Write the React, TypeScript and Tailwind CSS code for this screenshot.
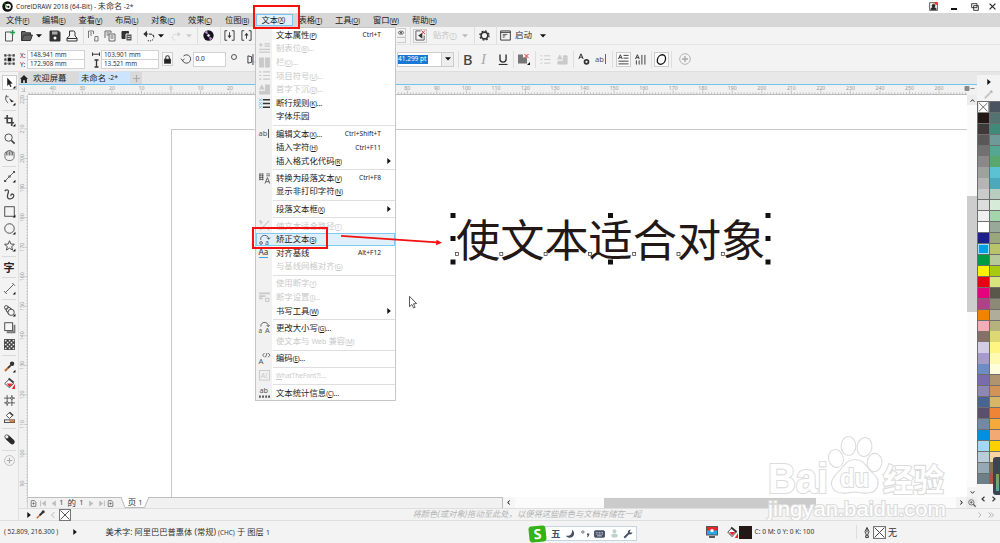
import type { ReactNode } from "react";
import clsx from "clsx";

const FONT = "font-['Noto_Sans','Noto_Sans_CJK_SC',sans-serif]";

/* ---------- small helpers ---------- */

const Ico = ({ children, s = "size-[12px]", vb = "0 0 12 12" }: { children: ReactNode; s?: string; vb?: string }) => (
  <svg viewBox={vb} className={clsx("shrink-0 overflow-visible", s)} fill="none" stroke="currentColor" strokeWidth={1}>
    {children}
  </svg>
);

const Cell = ({ w, children }: { w: string; children?: ReactNode }) => (
  <div className={clsx("flex h-full shrink-0 items-center", w)}>{children}</div>
);

const Caret = ({ c = "text-[#111]" }: { c?: string }) => (
  <svg viewBox="0 0 6 4" className={clsx("h-[4px] w-[6px]", c)}>
    <path d="M0 0.3h6L3 3.6z" fill="currentColor" />
  </svg>
);

const Play = ({ c = "text-[#111]" }: { c?: string }) => (
  <svg viewBox="0 0 4 6" className={clsx("h-[6px] w-[4px] shrink-0", c)}>
    <path d="M0.3 0v6L3.8 3z" fill="currentColor" />
  </svg>
);

const Sep = () => <div className="h-[17px] w-px bg-[#dedede]" />;

const Key = ({ k }: { k: string }) => (
  <span className="text-[6.3px] tracking-[-0.2px]">
    (<u>{k}</u>)
  </span>
);

/* ---------- title + menu ---------- */

const TitleBar = () => (
  <header className="flex h-[13px] shrink-0 items-center bg-white">
    <Cell w="w-[16px]">
      <svg viewBox="0 0 12 12" className="ml-[1.5px] size-[11px]">
        <circle cx="6" cy="6" r="5.7" fill="#111" />
        <circle cx="6.6" cy="6" r="3.1" fill="#fff" />
        <path d="M2 1.8L7 6.5 4.8 7.2z" fill="#56b947" />
        <circle cx="7" cy="6.4" r="1.2" fill="#111" />
      </svg>
    </Cell>
    <span className="flex-1 text-[6.65px] leading-none text-[#333]">
      CorelDRAW 2018 (64-Bit) - <span className="text-[8.1px]">未命名</span> -2*
    </span>
    <div className="flex items-center text-[#222]">
      <Cell w="w-[22px]">
        <Ico s="size-[9px]">
          <rect x="1" y="1" width="10" height="10" />
          <circle cx="6" cy="5" r="2" fill="currentColor" />
          <path d="M2.5 10c0-4 7-4 7 0z" fill="currentColor" />
          <circle cx="9.6" cy="1.8" r="2.2" fill="#f33" stroke="none" />
        </Ico>
      </Cell>
      <Cell w="w-[20px]">
        <div className="mt-[4px] h-[2px] w-[6px] bg-[#111]" />
      </Cell>
      <Cell w="w-[18px]">
        <Ico s="size-[8px]">
          <path d="M1 1h8v6H1zM4 4h7v7H4z" strokeWidth={1.3} fill="#fff" />
        </Ico>
      </Cell>
      <Cell w="w-[11px]">
        <Ico s="size-[7px]">
          <path d="M1 1l10 10M11 1L1 11" strokeWidth={2} />
        </Ico>
      </Cell>
    </div>
  </header>
);

const menus = [
  { t: "文件", k: "F", w: "w-[36px]" },
  { t: "编辑", k: "E", w: "w-[36.5px]" },
  { t: "查看", k: "V", w: "w-[36.5px]" },
  { t: "布局", k: "L", w: "w-[36px]" },
  { t: "对象", k: "C", w: "w-[37px]" },
  { t: "效果", k: "C", w: "w-[37px]" },
  { t: "位图", k: "B", w: "w-[31px]" },
  { t: "文本", k: "X", w: "w-[42.5px]", active: true },
  { t: "表格", k: "T", w: "w-[36.5px]" },
  { t: "工具", k: "O", w: "w-[38px]" },
  { t: "窗口", k: "W", w: "w-[39px]" },
  { t: "帮助", k: "H", w: "w-[36px]" },
];

const MenuBar = () => (
  <nav className="flex h-[14px] shrink-0 items-center bg-[#d7d7d7] pl-[6px] text-[8.3px] leading-none text-[#222]">
    {menus.map((m) => (
      <div key={m.t} className={clsx("shrink-0 whitespace-nowrap", m.w)}>
        <span
          className={clsx(
            m.active && "flex h-[12px] w-[37px] items-center border border-[#7cc5ee] bg-[#e3eff9] pl-[4.5px]"
          )}
        >
          {m.t}
          <Key k={m.k} />
        </span>
      </div>
    ))}
  </nav>
);

/* ---------- toolbars ---------- */

const StandardBar = () => (
  <div className="flex h-[18px] shrink-0 items-center border-b border-[#e4e4e4] bg-[#f3f3f3] pl-[4px] text-[#333]">
    <Cell w="w-[17px]">
      <Ico>
        <path d="M7 2H1.5v9h7V5" stroke="#555" />
        <path d="M8.6 0v5M6.1 2.5h5" stroke="#21a04a" strokeWidth={1.6} />
      </Ico>
    </Cell>
    <Cell w="w-[15px]">
      <Ico>
        <path d="M0.6 10.5v-9h3.6l1 1.3h4.3V5M0.6 10.5L3 5h8.4l-2 5.5z" fill="#333" fillOpacity={0.75} />
      </Ico>
    </Cell>
    <Cell w="w-[13px]"><Caret /></Cell>
    <Cell w="w-[17px]">
      <Ico>
        <path d="M1 1h8.5L11 2.5V11H1z" fill="#333" />
        <path d="M3 1.5h5.5v3H3z" fill="#aaa" stroke="none" />
        <circle cx="6" cy="8" r="1.5" fill="#fff" stroke="none" />
      </Ico>
    </Cell>
    <Cell w="w-[17px]">
      <Ico>
        <path d="M3.5 6V1h4.3L9 2.2V6M3.5 6L1 8v3h10V8L9 6M1 8.5h10" />
      </Ico>
    </Cell>
    <Cell w="w-[4px]"><Sep /></Cell>
    <Cell w="w-[17px]">
      <Ico>
        <path d="M1.5 8V1h5v3M3 3h2M3 5h2M8 6.5h3V11H7.6z" stroke="#777" />
      </Ico>
    </Cell>
    <Cell w="w-[17px]">
      <Ico>
        <path d="M1 8V1h6v2M2.5 3h3M2.5 5h2M5 4h6v7H5zM6.5 6h3M6.5 8h3" stroke="#666" />
      </Ico>
    </Cell>
    <Cell w="w-[16px]">
      <Ico>
        <path d="M1 1.5h6.5v7H1z" fill="#333" />
        <path d="M5 4h6v7H5z" fill="#555" stroke="#f3f3f3" />
        <path d="M6.5 6.5h3M6.5 8.5h3" stroke="#ccc" />
      </Ico>
    </Cell>
    <Cell w="w-[6px]"><Sep /></Cell>
    <Cell w="w-[15px]">
      <Ico>
        <path d="M2 4h4.5c3.500 0 4.700 2 4.200 4.300" strokeDasharray="3 0.8" strokeWidth={1.2} />
        <path d="M4 0.8L0.3 4 4 7.2z" fill="currentColor" stroke="none" />
        <path d="M10 9.5c-1.5 1.7-4 1.9-6 .6" strokeDasharray="1.2 1" />
      </Ico>
    </Cell>
    <Cell w="w-[13px]"><Caret /></Cell>
    <Cell w="w-[15px]">
      <Ico s="size-[10px]">
        <path d="M10 4H6C2.5 4 1 6 1.5 8.500c.5 1.500 2 2.500 4 2.500" stroke="#cfcfcf" strokeDasharray="2.4 0.8" />
        <path d="M8 1l3.500 3L8 7z" fill="#cfcfcf" stroke="none" />
      </Ico>
    </Cell>
    <Cell w="w-[11px]"><Caret c="text-[#ccc]" /></Cell>
    <Cell w="w-[6px]"><Sep /></Cell>
    <Cell w="w-[17px]">
      <Ico s="size-[11px]">
        <circle cx="6" cy="6" r="5.6" fill="#16101f" stroke="none" />
        <path d="M6 6L1.8 2.6A5.5 5.5 0 014.5 0.7zM6 6l4.2 3.4A5.5 5.5 0 017.5 11.3z" fill="#b78bd6" stroke="none" />
        <circle cx="6" cy="6" r="1.9" fill="#fff" stroke="#16101f" />
      </Ico>
    </Cell>
    <Cell w="w-[4px]"><Sep /></Cell>
    <Cell w="w-[17px]">
      <Ico s="size-[11px]">
        <path d="M3.5 0.8H1v10.4h2.5M8.5 0.8H11v10.4H8.5M6 2.5v5" />
        <path d="M3.8 6h4.4L6 9z" fill="currentColor" stroke="none" />
      </Ico>
    </Cell>
    <Cell w="w-[156px]">
      <Ico s="size-[11px]">
        <path d="M3.5 0.8H1v10.4h2.5M8.5 0.8H11v10.4H8.5M6 9.5v-5" />
        <path d="M3.8 6h4.4L6 3z" fill="currentColor" stroke="none" />
      </Ico>
    </Cell>
    <Cell w="w-[13px]">
      <div className="flex h-[15px] w-[9px] items-start border border-l-0 border-[#ccc] pt-px">
        <Ico s="size-[8px]">
          <ellipse cx="6" cy="4" rx="4" ry="2.4" />
          <circle cx="6" cy="4" r="1" fill="currentColor" />
          <path d="M0 11h12" stroke="#999" />
        </Ico>
      </div>
    </Cell>
    <Cell w="w-[3px]"><Sep /></Cell>
    <Cell w="w-[20px]">
      <div className="flex size-[14px] items-center justify-center border border-[#ccc]">
        <Ico s="size-[11px]">
          <path d="M6 1H1v10h9V6" stroke="#555" />
          <path d="M8 3L3.5 6 8 9.5z" fill="#333" stroke="none" />
          <path d="M7 0.5l4 4M11 0.5l-4 4" stroke="#e8272c" />
        </Ico>
      </div>
    </Cell>
    <Cell w="w-[29px]">
      <span className="text-[8.3px] leading-none whitespace-nowrap text-[#c4c4c4]">贴齐<Key k="T" /></span>
    </Cell>
    <Cell w="w-[12px]"><Caret c="text-[#bbb]" /></Cell>
    <Cell w="w-[5px]"><Sep /></Cell>
    <Cell w="w-[17px]">
      <Ico s="size-[11px]">
        <circle cx="6" cy="6" r="3.7" strokeWidth={1.8} />
        <circle cx="6" cy="6" r="5" strokeWidth={1.4} strokeDasharray="2 1.93" />
      </Ico>
    </Cell>
    <Cell w="w-[4px]"><Sep /></Cell>
    <Cell w="w-[15px]">
      <Ico s="size-[11px]">
        <path d="M0.7 1h10.6v10H0.7zM0.7 2.6h10.6" />
        <path d="M3 4.8h5M3 6.3h3M3 7.8h2" strokeWidth={0.8} />
      </Ico>
    </Cell>
    <Cell w="w-[25px]"><span className="text-[8.5px] leading-none">启动</span></Cell>
    <Cell w="w-[8px]"><Caret /></Cell>
  </div>
);

const Field = ({ v, w }: { v: string; w: string }) => (
  <div className={clsx("flex h-[10px] items-center border border-[#d2d2d2] bg-white pt-[1.5px] pl-[2px] text-[6.3px] leading-none text-[#333]", w)}>
    {v}
  </div>
);

const PropertyBar = () => (
  <div className="flex h-[27px] shrink-0 items-center border-b border-[#dedede] bg-[#f3f3f3] pt-[2px] pl-[4px] text-[#333]">
    <Cell w="w-[16px]">
      <Ico s="size-[11px]">
        <rect x="1.5" y="1.5" width="9" height="9" strokeDasharray="1 1" />
        <path d="M0 0h3v3H0zM4.5 0h3v3h-3zM9 0h3v3H9zM0 4.5h3v3H0zM9 4.5h3v3H9zM0 9h3v3H0zM4.5 9h3v3h-3zM9 9h3v3H9z" fill="#444" stroke="#f3f3f3" strokeWidth={0.5} />
        <rect x="4" y="4" width="4" height="4" fill="#111" stroke="none" />
      </Ico>
    </Cell>
    <Cell w="w-[7px]">
      <div className="flex flex-col gap-[2px] pt-px text-[6.3px] leading-[7px]">
        <span>X:</span>
        <span>Y:</span>
      </div>
    </Cell>
    <Cell w="w-[65px]">
      <div className="-space-y-px">
        <Field v="148.941 mm" w="w-[58px]" />
        <Field v="172.908 mm" w="w-[58px]" />
      </div>
    </Cell>
    <Cell w="w-[9px]">
      <Ico s="h-[18px] w-[8px]" vb="0 0 8 18">
        <path d="M0.5 2.5v3.4M7.5 2.5v3.4M1 4.2h6" />
        <path d="M2.5 10h4M2.5 17h4M4.5 10v7" strokeWidth={1.3} />
      </Ico>
    </Cell>
    <Cell w="w-[60.5px]">
      <div className="-space-y-px">
        <Field v="103.901 mm" w="w-[58px]" />
        <Field v="13.521 mm" w="w-[58px]" />
      </div>
    </Cell>
    <Cell w="w-[19px]">
      <div className="flex h-[14px] w-[11px] items-center justify-center border border-[#d0d0d0] bg-[#fafafa]">
        <Ico s="size-[9px]">
          <path d="M3.6 6V3.5a2.4 2.4 0 014.8 0V6" strokeWidth={1.4} />
          <rect x="1.8" y="5.5" width="8.4" height="5.5" fill="#222" />
        </Ico>
      </div>
    </Cell>
    <Cell w="w-[12px]">
      <Ico s="size-[10px]">
        <path d="M1.8 7.5A5 5 0 103 2.5M0 5.5l1.8 2.4 2.4-2" />
      </Ico>
    </Cell>
    <Cell w="w-[38px]">
      <div className="flex h-[15px] w-[33px] items-center border border-[#d2d2d2] bg-white pl-[2px] text-[6.6px] leading-none">0.0</div>
    </Cell>
    <Cell w="w-[16px]">
      <div className="mb-[4px] size-[6px] rounded-full border border-[#555]" />
    </Cell>
    <Cell w="w-[150.5px]">
      <Ico s="size-[11px]">
        <path d="M1 2v8l4-1V3zM6.5 0v12" />
        <path d="M8 9l4-7v8z" fill="#28a3e0" stroke="none" />
      </Ico>
    </Cell>
    <Cell w="w-[61px]">
      <div className="flex h-[15px] w-[57px] items-center border border-[#ccc] bg-white">
        <span className="flex h-[9px] w-[30px] items-center bg-[#1a78d4] text-[6.5px] leading-none whitespace-nowrap text-white">41.299 pt</span>
        <span className="ml-auto flex h-full w-[12px] items-center justify-center border-l border-[#ccc] bg-[#ededed]"><Caret /></span>
      </div>
    </Cell>
    <Cell w="w-[5px]"><Sep /></Cell>
    <Cell w="w-[18px]">
      <span className="text-[14.5px] leading-none font-medium text-[#444]">B</span>
    </Cell>
    <Cell w="w-[17px]">
      <span className="font-['Liberation_Serif',serif] text-[15px] leading-none text-[#aaa] italic">I</span>
    </Cell>
    <Cell w="w-[15px]">
      <Ico s="size-[11px]">
        <path d="M2.2 0.5v5.300c0 4 6.600 4 6.600 0V0.5" strokeWidth={1.5} />
        <path d="M0.8 11.4h9.6" strokeWidth={1.2} />
      </Ico>
    </Cell>
    <Cell w="w-[5px]"><Sep /></Cell>
    <Cell w="w-[17px]">
      <Ico>
        <path d="M0 1.5h5v3h4v6H0z" fill="#777" stroke="none" />
        <path d="M6.5 1l4 4M10.5 1l-4 4" stroke="#e8272c" />
        <path d="M12 9v3H9z" fill="#111" stroke="none" />
      </Ico>
    </Cell>
    <Cell w="w-[5px]"><Sep /></Cell>
    <Cell w="w-[17px]">
      <Ico s="size-[11px]">
        <path d="M0.5 2h2M0.5 6h2M0.5 10h2M4.5 2h7M4.5 6h7M4.5 10h7" stroke="#c8c8c8" />
      </Ico>
    </Cell>
    <Cell w="w-[16px]">
      <Ico s="size-[11px]">
        <path d="M0.5 6L3 1l2.5 5M7 2h4v9H1V8h6z" fill="#ccc" stroke="#c8c8c8" />
      </Ico>
    </Cell>
    <Cell w="w-[5px]"><Sep /></Cell>
    <Cell w="w-[17px]">
      <Ico>
        <path d="M0.8 6L3 0.8 5.2 6M1.6 4.2h2.8" />
        <circle cx="8.5" cy="8.8" r="2" strokeWidth={1.7} />
      </Ico>
    </Cell>
    <Cell w="w-[17px]">
      <span className="border-r border-[#666] pr-px text-[7.6px] leading-[10px] text-[#555]">ab</span>
    </Cell>
    <Cell w="w-[4px]"><Sep /></Cell>
    <Cell w="w-[19px]">
      <div className="flex size-[15px] items-center justify-center border border-[#ccc] bg-[#fbfbfb]">
        <Ico s="size-[11px]">
          <path d="M0.5 5.5L2.6 0.8 4.7 5.5M1.2 4h3M6 1.5h5.5M6 4.5h5.5M0.5 7.8h11M0.5 10.8h11" />
        </Ico>
      </div>
    </Cell>
    <Cell w="w-[15.5px]">
      <Ico s="size-[11px]">
        <path d="M0.5 5.5L2.6 0.8 4.7 5.5M1.2 4h3M1.5 7v4.5M4.5 7v4.5M7.5 1v10.5M10.8 1v10.5" />
      </Ico>
    </Cell>
    <Cell w="w-[3.5px]"><Sep /></Cell>
    <Cell w="w-[17px]">
      <div className="flex size-[15px] items-center justify-center border border-[#ccc] bg-[#fbfbfb]">
        <Ico s="size-[11px]">
          <ellipse cx="6" cy="6" rx="4.4" ry="5.2" transform="skewX(-10) translate(1 0)" stroke="#111" strokeWidth={1.4} />
        </Ico>
      </div>
    </Cell>
    <Cell w="w-[8px]"><Sep /></Cell>
    <Cell w="w-[12px]">
      <Ico s="size-[12px]">
        <circle cx="6" cy="6" r="5.3" stroke="#b5b5b5" />
        <path d="M6 3v6M3 6h6" stroke="#aaa" strokeWidth={1.4} />
      </Ico>
    </Cell>
  </div>
);

/* ---------- toolbox ---------- */

const Corner = () => <path d="M12.5 9.5v3h-3z" fill="#111" stroke="none" />;

const tools: (ReactNode | null)[] = [
  <><path d="M3.5 0.8v9l2-2 1.3 3.2 1.4-.6-1.4-3.1 2.7-.2z" fill="#222" stroke="none" /><Corner /></>,
  <><path d="M3 1C1 4 1.5 7 4.5 10M2 3h3" stroke="#555" /><path d="M5.5 4.5l5.4 3.8-3 .8z" fill="#333" stroke="none" /><Corner /></>,
  null,
  <><path d="M3.5 0v8.5H11M0.5 3.5H8.5V12" strokeWidth={1.8} /><Corner /></>,
  <><circle cx="5" cy="5" r="4" /><path d="M8 8l3.6 3.6" strokeWidth={1.7} /></>,
  <path d="M1 6V3.5c0-1 1.6-1 1.6 0V2c0-1 1.7-1 1.7 0V1.3c0-1 1.7-1 1.7 0V1.1c0-1 1.7-1 1.7 0V2c0-1 1.6-1 1.6 0v1c0-1 1.7-1 1.7 0v4.5c0 2.6-1.8 4-5 4S1 10 1 7.5zM2.6 3v3M4.3 2v4M6 1.5V6M7.7 2v4M9.3 3v3" strokeWidth={0.8} />,
  null,
  <><path d="M1 11L6 6l5-5" strokeWidth={0.9} /><path d="M0 9.8h2.4v2.2H0zM4.8 4.8h2.4v2.4H4.8zM9.8 0H12v2.2H9.8z" fill="#555" stroke="none" /><Corner /></>,
  <path d="M0.8 2.2C3 0 5.5 1 4.8 3.6 3.8 6.5 2.5 9 5 10.5c2.6 1.2 6-1 5.6-3.6C10 4.5 7 5.4 7.6 7.6" strokeWidth={1.4} />,
  <><rect x="0.8" y="0.8" width="10.4" height="10.4" /><Corner /></>,
  <><circle cx="6" cy="6" r="5.2" /><Corner /></>,
  <><path d="M6 0.8l1.5 3.6 3.9.3-3 2.5 1 3.8L6 8.9 2.6 11l1-3.8-3-2.5 3.9-.3z" /><Corner /></>,
  null,
  "text",
  null,
  <><path d="M1.5 10.5l9-9M0 8.8L3 12M9 0l3 3" strokeWidth={0.9} /><Corner /></>,
  null,
  <><circle cx="2.5" cy="2.6" r="2" /><path d="M1.5 4.3L5 10.3M4 1.3L10.5 6" strokeWidth={0.8} /><circle cx="5" cy="5.2" r="2.6" strokeWidth={0.8} /><circle cx="7.8" cy="8" r="3.4" fill="#f3f3f3" /><Corner /></>,
  <><path d="M3 11.2h8.4V3" stroke="#777" strokeWidth={2} /><rect x="0.8" y="0.8" width="8.6" height="8.6" fill="#f6f6f6" /></>,
  <>
    <rect x="0.6" y="0.6" width="10.8" height="10.8" fill="#3a3a3a" />
    {[0, 1, 2, 3, 4].map((r) =>
      [0, 1, 2, 3, 4].map((c) =>
        (r + c) % 2 ? null : <rect key={`${r}${c}`} x={1 + c * 2.1} y={1 + r * 2.1} width="1.7" height="1.7" fill="#eee" stroke="none" />
      )
    )}
  </>,
  null,
  <><path d="M1 11l5.5-5.5" stroke="#c96a2e" strokeWidth={2.2} /><path d="M4.5 7.5l3-3" strokeWidth={1.8} /><circle cx="8.8" cy="3" r="2.4" fill="#333" stroke="none" /><Corner /></>,
  <><path d="M6 1L0.8 6 6 10.5 10.5 6z" fill="#fff" /><path d="M3 6h6.6L6 9.8z" fill="#e8272c" stroke="none" /><path d="M5 0.5L10.5 5" strokeWidth={2} /><path d="M12 6.5V12H8.5z" fill="#e8272c" stroke="none" /></>,
  <><path d="M3.4 0v12M8.6 0v12M0 3.4h12M0 8.6h12" strokeWidth={0.9} /><circle cx="3.4" cy="8.6" r="1.3" fill="#fff" /><circle cx="8.6" cy="3.4" r="1.3" fill="#fff" /></>,
  <><path d="M6 0.5L2.5 3.8 6 7l3.5-3.2z" fill="#fff" /><path d="M6 .5l4 3.4" strokeWidth={1.8} /><rect x="0.5" y="8.6" width="11" height="2.8" /><rect x="6" y="9" width="5.5" height="2.2" fill="#e07b2c" stroke="none" /></>,
  null,
  <><path d="M4 4l5 4.6" strokeWidth={5.4} strokeLinecap="round" stroke="#2b2b2b" /><circle cx="3" cy="3" r="2.1" fill="#f3f3f3" stroke="#555" /></>,
  null,
  <><circle cx="6" cy="6" r="5.4" stroke="#bbb" /><path d="M6 3v6M3 6h6" stroke="#aaa" strokeWidth={1.2} /></>,
];

const Toolbox = () => (
  <aside className="flex w-[19px] shrink-0 flex-col items-center border-r border-[#e0e0e0] bg-[#f3f3f3] pt-[1.5px] text-[#444]">
    {tools.map((t, i) =>
      t === null ? (
        <div key={i} className="flex h-[4.4px] w-[14px] items-center"><div className="h-px w-full bg-[#dadada]" /></div>
      ) : (
        <div key={i} className="flex h-[17.2px] w-full shrink-0 items-center justify-center">
          <div className={clsx("flex size-[15px] items-center justify-center", i === 0 && "border border-[#ccc] bg-white")}>
            {t === "text" ? (
              <span className="text-[11px] leading-none font-bold text-[#222]">字</span>
            ) : (
              <Ico s="size-[11px]">{t}</Ico>
            )}
          </div>
        </div>
      )
    )}
  </aside>
);

/* ---------- rulers ---------- */

const STEP = 29.54;

// labels 30..70 sit behind the open menu
const hLabels = Array.from({ length: 31 }, (_, i) => i - 4).filter((n) => n < 3 || n > 7);

const HRuler = () => {
  const ticks = Array.from({ length: 320 }, (_, i) => i - 48);
  return (
    <svg className="block h-[10px] w-full shrink-0 overflow-hidden" viewBox="19 85 958 10" preserveAspectRatio="none">
      <rect x="19" y="85" width="958" height="10" fill="#f1f1f1" />
      {ticks.map((n) => {
        const x = 171 + (n * STEP) / 10;
        return x > 29 && x < 967 ? (
          <path key={n} d={`M${x} 94v${n % 10 === 0 ? -3.5 : -1.6}`} stroke="#a5a5a5" strokeWidth={0.6} />
        ) : null;
      })}
      {hLabels.map((n) => (
        <text key={n} x={171 + n * STEP} y={90.4} textAnchor="middle" fontSize={5.2} fill="#999">
          {Math.abs(n * 10)}
        </text>
      ))}
      <path d="M28 94.5h939" stroke="#bbb" strokeWidth={1} />
      <path d="M21.5 88l3 3M21.5 91.5h4M24.5 87.5v4" stroke="#aaa" strokeWidth={0.6} />
      <path d="M965 86.5h4v4h-4zM970.5 88.5h4" stroke="#888" fill="#888" strokeWidth={1} />
    </svg>
  );
};

const VRuler = () => (
  <svg className="block h-[413px] w-[9px] shrink-0 overflow-hidden" viewBox="19 95 9 413">
    <rect x="19" y="95" width="9" height="413" fill="#f1f1f1" />
    {Array.from({ length: 138 }, (_, i) => i - 1).map((n) => (
      <path key={n} d={`M28 ${99.5 + (n * STEP) / 10}h${n % 10 === 0 ? -3.5 : -1.6}`} stroke="#a5a5a5" strokeWidth={0.6} />
    ))}
    {Array.from({ length: 14 }, (_, i) => i).map((n) => (
      <text key={n} transform={`translate(24.4 ${99.5 + n * STEP}) rotate(-90)`} textAnchor="middle" fontSize={5.2} fill="#999">
        {220 - n * 10}
      </text>
    ))}
    <path d="M27.6 95v413" stroke="#c4c4c4" strokeWidth={0.8} />
  </svg>
);

/* ---------- document ---------- */

const Tabs = () => (
  <div className="flex h-[12px] shrink-0 items-center bg-[#e8e8e8] text-[8.4px] leading-none whitespace-nowrap text-[#222]">
    <div className="flex h-full w-[60px] items-center bg-[#dadada] pt-px pl-[1px]">
      <Ico s="size-[8px]">
        <path d="M6 0L0 6h1.7v6h3V8h2.6v4h3V6H12z" fill="#222" stroke="none" />
      </Ico>
      <span className="ml-[5px]">欢迎屏幕</span>
    </div>
    <div className="flex h-full w-[51px] items-center bg-[#cce4fd] pt-px pl-[2px]">
      未命名<span className="ml-[2px] text-[6.8px]">-2*</span>
    </div>
    <div className="flex h-full w-[12px] items-center justify-center bg-[#d9d9d9] text-[#aaa]">
      <Ico s="size-[7px]"><path d="M6 0v12M0 6h12" strokeWidth={2} /></Ico>
    </div>
  </div>
);

const Canvas = () => (
  <div className="relative flex-1 overflow-hidden bg-white">
    <div className="absolute top-[34px] left-[143px] h-[400px] w-[800px] border-t border-l border-[#c8c8c8]" />
    <div className="absolute top-[116.5px] left-[428px] font-['Noto_Sans_CJK_SC',sans-serif] text-[44.2px] leading-[52px] whitespace-nowrap text-[#231815]">
      使文本适合对象
    </div>
    <svg className="absolute top-[115px] left-[420px] h-[60px] w-[330px]" viewBox="448 210 330 60">
      {[453, 610.5, 768].map((x) =>
        [215.5, 238.5, 262].map((y) =>
          x === 610.5 && y === 238.5 ? null : <rect key={`${x}-${y}`} x={x - 2.5} y={y - 2.5} width="5" height="5" fill="#111" />
        )
      )}
      {[0, 1, 2, 3, 4, 5, 6].map((n) => (
        <rect key={n} x={455.5 + n * 44.3} y="252.5" width="3" height="3" fill="#fff" stroke="#333" strokeWidth="0.7" />
      ))}
    </svg>
  </div>
);

const ScrollV = () => (
  <div className="flex w-[10px] shrink-0 flex-col items-center bg-[#fbfbfb] text-[#333]">
    <div className="flex h-[10px] w-full items-center justify-center bg-[#ececec]">
      <Ico s="size-[5px]"><path d="M1.5 9L6 4l4.5 5" strokeWidth={2.4} /></Ico>
    </div>
    <div className="mt-[91px] h-[116px] w-full bg-[#cdcdcd]" />
    <div className="mt-auto flex h-[10px] w-full items-center justify-center bg-[#f3f3f3]">
      <Ico s="size-[5px]"><path d="M1.5 3L6 8l4.5-5" strokeWidth={2.4} /></Ico>
    </div>
  </div>
);

const Bookmark = () => (
  <Ico s="size-[7px]"><path d="M2 2V11h8V4L7.5 1H2M4 6h4M6 4v4" strokeWidth={1.4} stroke="#666" /></Ico>
);

const Tri = ({ flip, bar }: { flip?: boolean; bar?: boolean }) => (
  <Ico s={clsx("size-[7px]", flip && "-scale-x-100")}>
    <path d="M2 1v10l7-5z" fill="#bbb" stroke="none" />
    {bar && <path d="M11 1v10" stroke="#bbb" strokeWidth={1.6} />}
  </Ico>
);

const PageNav = () => (
  <div className="flex h-[11px] shrink-0 bg-[#f1f1f1]">
    <div className="flex w-[474.5px] items-center border-t border-r border-[#bdbdbd] pl-[1.5px] text-[6.6px] leading-none text-[#333]">
      <Cell w="w-[10px]"><Bookmark /></Cell>
      <Cell w="w-[10px]"><Tri flip bar /></Cell>
      <Cell w="w-[10px]"><Tri flip /></Cell>
      <Cell w="w-[8px]">1</Cell>
      <Cell w="w-[12px]"><span className="text-[8.5px]">的</span></Cell>
      <Cell w="w-[8px]">1</Cell>
      <Cell w="w-[10px]"><Tri /></Cell>
      <Cell w="w-[9.5px]"><Tri bar /></Cell>
      <Cell w="w-[14px]"><Bookmark /></Cell>
      <div className="relative -mt-px flex h-[11px] w-[28px] items-center justify-center">
        <svg viewBox="0 0 28 12" className="absolute inset-0 h-[12px] w-[28px]">
          <path d="M0 0l4 10.5h19.5L28 0" fill="#fff" stroke="#aaa" strokeWidth="0.8" />
        </svg>
        <span className="relative text-[8.5px]">页 <span className="text-[6.6px]">1</span></span>
      </div>
    </div>
    <div className="flex w-[12px] items-center justify-center bg-[#f6f6f6]">
      <Ico s="size-[5px]"><path d="M9 1.5L4 6l5 4.5" strokeWidth={2.4} /></Ico>
    </div>
    <div className="flex flex-1 items-center bg-[#fbfbfb] pl-[89px]">
      <div className="h-[10px] w-[212px] bg-[#cbcbcb]" />
    </div>
    <div className="flex w-[10px] items-center justify-center bg-[#f3f3f3]">
      <Ico s="size-[5px]"><path d="M3 1.5L8 6l-5 4.5" strokeWidth={2.4} /></Ico>
    </div>
    <div className="flex w-[11px] items-center justify-center bg-[#ececec] text-[#444]">
      <Ico s="size-[8px]"><circle cx="5" cy="5" r="4" /><path d="M8 8l3.5 3.5" strokeWidth={1.8} /><path d="M3 5h4M5 3v4" /></Ico>
    </div>
  </div>
);

const Crossed = ({ s = "size-[12px]" }: { s?: string }) => (
  <Ico s={s}>
    <rect x="0.5" y="0.5" width="11" height="11" fill="#fff" stroke="#777" />
    <path d="M1.5 1.5l9 9M10.5 1.5l-9 9" stroke="#444" strokeWidth={0.9} />
  </Ico>
);

const DocPalette = () => (
  <div className="flex h-[13px] items-center border-t border-b border-[#dedede] bg-[#f3f3f3] pl-[8px]">
    <Cell w="w-[9px]"><Play /></Cell>
    <Cell w="w-[14px]">
      <Ico s="size-[9px]">
        <path d="M1 11l5-5" stroke="#c96a2e" strokeWidth={2} />
        <path d="M5 7l4-4" strokeWidth={2.6} stroke="#333" />
        <circle cx="9.6" cy="2.4" r="2" fill="#333" stroke="none" />
      </Ico>
    </Cell>
    <Cell w="w-[8.5px]"><Ico s="size-[6px]"><path d="M9 0L3 6l6 6" stroke="#bbb" strokeWidth={2} /></Ico></Cell>
    <Cell w="w-[354px]"><Crossed /></Cell>
    <span className="flex-1 text-[8.3px] leading-none whitespace-nowrap text-[#b4b4b4] italic">
      将颜色(或对象)拖动至此处，以便将这些颜色与文档存储在一起
    </span>
    <div className="flex w-[23px] gap-[5px] text-[#b5b5b5]">
      <Ico s="size-[6px]"><path d="M3 1l5 5-5 5" strokeWidth={2} /></Ico>
      <Ico s="size-[6px]"><path d="M1 1l5 5-5 5M6 1l5 5-5 5" strokeWidth={2} /></Ico>
    </div>
  </div>
);

/* ---------- colour palette ---------- */

const swatches = [
  ["none", "#495460"], ["#231815", "#527370"], ["#3e3a39", "#3f8a78"], ["#595757", "#6f9a9a"],
  ["#727171", "#55a693"], ["#898989", "#5aa76e"], ["#9fa0a0", "#5bc2d4"], ["#b5b5b6", "#4da8bb"],
  ["#c9caca", "#b8cdbf"], ["#dcdddd", "#d7ecd8"], ["#efefef", "#a3d6aa"], ["#ffffff", "#98a99a"],
  ["#1d2088", "#9aa67b"], ["#00a0e9", "#b9c46a"], ["#009944", "#b5c99a"], ["#fff100", "#a8cb12"],
  ["#e60012", "#d8e57c"], ["#e4007f", "#59564a"], ["#ae4286", "#8c8a76"], ["#f08300", "#b0ae9b"],
  ["#f4adb5", "#b5b27e"], ["#85716a", "#ddd873"], ["#d2cce6", "#fff582"], ["#a59aca", "#fff9b1"],
  ["#6c8bc7", "#fffedc"], ["#7a6bb0", "#b0946f"], ["#8f86b3", "#d29359"], ["#4a6491", "#d7b668"],
  ["#595070", "#ef8336"], ["#7189a5", "#f6aa3b"], ["#0090dc", "#f2a974"], ["#9fd9f6", "#fdd000"],
  ["#b7cddb", "#fbd5a0"], ["#96a8b3", "#8a7044"], ["#6e7f88", "#b0563b"],
];

const Palette = () => (
  <aside className="flex w-[23px] shrink-0 flex-col bg-[#f3f3f3]">
    <div className="h-[3px] bg-[#e6e6e6]" />
    <div className="flex h-[13px] items-center justify-center"><Play /></div>
    <div className="flex h-[13px] items-center justify-center">
      <Ico s="size-[9px]">
        <path d="M1 11l7-7" stroke="#c4c4c4" strokeWidth={2.4} />
        <circle cx="9.6" cy="2.4" r="2" fill="#bbb" stroke="none" />
      </Ico>
    </div>
    <div className="bg-[#6e6e6e] pl-px">
      {swatches.map(([a, b], i) => (
        <div key={i} className="flex h-[10.94px] gap-px pt-[0.8px]">
          {a === "none" ? (
            <Ico s="h-full w-[10.5px]">
              <rect x="0" y="0" width="12" height="12" fill="#fff" stroke="none" />
              <path d="M1 1l10 10M11 1L1 11" stroke="#555" />
            </Ico>
          ) : (
            <div className={clsx("h-full w-[10.5px]", i === 13 && "border border-[#9adcfa]")} style={{ backgroundColor: a }} />
          )}
          <div className="h-full flex-1" style={{ backgroundColor: b }} />
        </div>
      ))}
    </div>
    <div className="mt-[12px] flex justify-around px-[1px] text-[#333]">
      <Ico s="size-[6px]"><path d="M9 1.5L4 6l5 4.5" strokeWidth={2.2} /></Ico>
      <Ico s="size-[6px]"><path d="M3 1.5L8 6l-5 4.5" strokeWidth={2.2} /></Ico>
    </div>
  </aside>
);

/* ---------- status ---------- */

const StatusBar = () => (
  <footer className="flex h-[22px] shrink-0 items-center bg-[#f3f3f3] pl-[4px] text-[6.8px] leading-none whitespace-nowrap text-[#333]">
    <Cell w="w-[68.5px]"><span className="text-[6.4px]">( 52.809, 216.300 )</span></Cell>
    <Cell w="w-[33px]"><Play /></Cell>
    <Cell w="w-[600px]">
      <span><span className="text-[8.25px]">美术字: 阿里巴巴普惠体 (常规) </span><span className="text-[6.4px]">(CHC)</span><span className="text-[8.25px]"> 于 图层 </span>1</span>
    </Cell>
    <Cell w="w-[21px]">
      <Ico>
        <rect x="0.5" y="0.5" width="11" height="8.5" fill="#2aa7e8" stroke="#555" />
        <path d="M1 1h10v3.5H1z" fill="#e8272c" stroke="none" />
        <circle cx="6" cy="4.6" r="1.7" fill="#fff" stroke="none" />
        <path d="M3 11h6" strokeWidth={1.6} />
      </Ico>
    </Cell>
    <Cell w="w-[12px]">
      <Ico s="size-[11px]">
        <path d="M5.5 1L0.8 5.5 5.5 10.5 10 5.5z" fill="#fff" />
        <path d="M2.5 5.5h6.6L5.5 9.4z" fill="#e8272c" stroke="none" />
        <path d="M4.5 0.5l6 5" strokeWidth={2} />
        <path d="M12 6.5V12H8.5z" fill="#e8272c" stroke="none" />
      </Ico>
    </Cell>
    <Cell w="w-[16px]"><div className="size-[13px] bg-[#231815]" /></Cell>
    <Cell w="w-[101.5px]"><span className="text-[6.6px]">C: 0 M: 0 Y: 0 K: 100</span></Cell>
    <Cell w="w-[8px]"><div className="h-[14px] w-px bg-[#ddd]" /></Cell>
    <Cell w="w-[9px]">
      <Ico s="h-[11px] w-[6px]" vb="0 0 6 12">
        <path d="M3 0.5L0.8 5l1.4 3.5h1.6L5.2 5zM3 1v5M1.5 9.5h3v2h-3z" />
      </Ico>
    </Cell>
    <Cell w="w-[15px]"><Crossed s="size-[13px]" /></Cell>
    <span className="text-[9px]">无</span>
  </footer>
);

/* ---------- dropdown ---------- */

type Entry = { t: string; k?: string; s?: string; off?: boolean; sub?: boolean; hot?: boolean; i?: ReactNode } | null;

const entries: Entry[] = [
  { t: "文本属性", k: "P", s: "Ctrl+T" },
  { t: "制表位", k: "B", off: true, i: <path d="M0 2h4M2 0v4M6 1h6M6 3.5h6M0 7h12M0 10h12" strokeWidth={1.4} /> },
  { t: "栏", k: "O", off: true, i: <path d="M0.5 1h4.5v10H0.5zM7 1h4.5v10H7z" fill="currentColor" /> },
  { t: "项目符号", k: "U", off: true, i: <path d="M0 2h2.5M0 6h2.5M0 10h2.5M4.5 2H12M4.5 6H12M4.5 10H12" strokeWidth={1.3} /> },
  { t: "首字下沉", k: "D", off: true, i: <path d="M0.5 6L3 1l2.5 5M7 1h4.5v10H0.5V8H7z" fill="currentColor" /> },
  { t: "断行规则", k: "K", i: <><path d="M4.2 2H12M4.2 6H12M4.2 10H12" strokeWidth={1.6} stroke="#333" /><path d="M0 0.5l3 3M3 0.5l-3 3M0 4.5l3 3M3 4.5l-3 3M0 8.5l3 3M3 8.5l-3 3" stroke="#5bbdea" strokeWidth={0.9} /></> },
  { t: "字体乐园" },
  null,
  { t: "编辑文本", k: "X", s: "Ctrl+Shift+T", i: "ab" },
  { t: "插入字符", k: "H", s: "Ctrl+F11" },
  { t: "插入格式化代码", k: "R", sub: true },
  null,
  { t: "转换为段落文本", k: "V", s: "Ctrl+F8", i: <><path d="M0 1h5M0 3h5M0 5h5M0 7h5M1 1v7M4 1v7M8 1h4M8 3h4" strokeWidth={0.9} /><path d="M6.5 11.5L9.2 5l2.6 6.5M7.5 9.5h3.4" /></> },
  { t: "显示非打印字符", k: "N" },
  null,
  { t: "段落文本框", k: "X", sub: true },
  null,
  { t: "使文本适合路径", k: "T", off: true, i: <path d="M1 11L11 1M0 1l4 2M2 0v5M8 8l3 3M4 7l2 2" strokeWidth={1.3} /> },
  { t: "矫正文本", k: "S", hot: true, i: <><path d="M2 6.5C0.5 0 11 0 10.5 5.5M8.6 3.9l1.9 1.9 1.7-1.9" /><circle cx="2.2" cy="9.8" r="1.5" /><text x="6.6" y="12" fontSize="7.5" stroke="none" fill="currentColor">a</text></> },
  { t: "对齐基线", s: "Alt+F12", i: "Aa" },
  { t: "与基线网格对齐", k: "G", off: true },
  null,
  { t: "使用断字", k: "Y", off: true },
  { t: "断字设置", k: "I", off: true, i: <><path d="M0 1.5h12M0 4.5h7M0 7h4" strokeWidth={1.8} /><circle cx="9" cy="8.6" r="2" strokeWidth={1.4} /></> },
  { t: "书写工具", k: "W", sub: true },
  null,
  { t: "更改大小写", k: "G", i: <><path d="M2 5C1.5 -1 10.5 -1 10 4.5M8.4 3.4l1.6 1.8 1.6-1.8" /><text x="-0.6" y="12" fontSize="7" stroke="none" fill="currentColor">a</text><text x="6.6" y="12" fontSize="8" stroke="none" fill="currentColor">A</text></> },
  { t: "使文本与 Web 兼容", k: "M", off: true },
  null,
  { t: "编码", k: "E", i: <><path d="M6 0L4 2.3 6 4.6M10 0l2 2.3L10 4.6M8.7 0L7.2 4.6" strokeWidth={0.9} /><text x="-0.6" y="12.4" fontSize="8.5" stroke="none" fill="currentColor">A</text></> },
  null,
  { t: "WhatTheFont?!...", off: true, i: <><rect x="0.5" y="0.5" width="11" height="10.5" /><text x="2" y="9" fontSize="8" stroke="none" fill="currentColor">A!</text></> },
  null,
  { t: "文本统计信息", k: "C", i: <><text x="0.5" y="6.2" fontSize="8" stroke="none" fill="currentColor">ab</text><path d="M0 10.5h2M3.4 10.5h2M6.8 10.5h2M10 10.5h2" strokeWidth={2.4} /></> },
];

const dotted = new Set(["制表位", "栏", "项目符号", "首字下沉", "断行规则", "编辑文本", "断字设置", "更改大小写", "编码", "文本统计信息"]);

const EntryIcon = ({ e }: { e: NonNullable<Entry> }) => {
  if (e.i === "ab") return <span className="border-r border-[#555] pr-px text-[7.4px] leading-[9px]">ab</span>;
  if (e.i === "Aa") return <span className="border-b border-[#35a8e0] text-[8.2px] leading-[8.5px] text-[#333]">Aa</span>;
  return e.i ? <Ico s="size-[11px]">{e.i}</Ico> : null;
};

const Dropdown = () => (
  <div className="absolute top-[27px] left-[255px] h-[374px] w-[141px] border border-[#c6c6c6] bg-[linear-gradient(90deg,#f1f1f1_16px,#fff_16px)] pt-[0.3px] text-[#222]">
    {entries.map((e, i) =>
      e === null ? (
        <div key={i} className="flex h-[3.5px] items-center pl-[17px]"><div className="h-px w-full bg-[#dfdfdf]" /></div>
      ) : (
        <div
          key={i}
          className={clsx(
            "flex h-[13.6px] items-center text-[8.4px] leading-none whitespace-nowrap",
            e.off && "text-[#c9c9c9]",
            e.hot && "bg-[#e0effc] outline outline-[#7ecbf3] -outline-offset-1"
          )}
        >
          <div className={clsx("flex w-[20px] shrink-0 items-center pl-[2.5px]", !e.off && "text-[#555]")}><EntryIcon e={e} /></div>
          {e.t.startsWith("What") ? (
            <span className="text-[6.4px]"><u>W</u>hatTheFont?!...</span>
          ) : (
            <span>
              {e.t.includes("Web") ? <>使文本与 <span className="text-[7px]">Web</span> 兼容</> : e.t}
              {e.k && <Key k={e.k} />}
              {dotted.has(e.t) && <span className="text-[7px]">...</span>}
            </span>
          )}
          {e.s && <span className="mr-[14px] ml-auto pt-px text-[6.6px]">{e.s}</span>}
          {e.sub && <span className="mr-[4px] ml-auto"><Play /></span>}
        </div>
      )
    )}
  </div>
);

/* ---------- overlays ---------- */

const Annotations = () => (
  <svg className="pointer-events-none absolute inset-0 h-[543px] w-[1000px]" viewBox="0 0 1000 543" fill="none">
    <rect x="254" y="6" width="45" height="22" stroke="#f5110f" strokeWidth="2" />
    <rect x="253" y="228" width="74" height="20" stroke="#f5110f" strokeWidth="2" />
    <path d="M341 235.8l96 6.6" stroke="#f5110f" strokeWidth="1.8" />
    <path d="M436.5 239.7l5.5 3-6 2.6z" fill="#f5110f" />
    <path d="M409.5 296.3v10.4l2.4-2.2 1.7 3.5 1.5-.7-1.6-3.5 3.1-.2z" fill="#fff" stroke="#333" strokeWidth="0.8" />
  </svg>
);

const Watermark = () => (
  <svg
    className="pointer-events-none absolute top-[430px] left-[760px] h-[95px] w-[195px] font-['Liberation_Sans','Noto_Sans_CJK_SC',sans-serif] [paint-order:stroke]"
    viewBox="760 430 195 95"
    fill="#fff"
    stroke="#dcdcdc"
    strokeWidth="2.2"
  >
    <ellipse cx="848.5" cy="446" rx="6.8" ry="9" />
    <ellipse cx="864.5" cy="447" rx="6.8" ry="9" transform="rotate(10 864.5 447)" />
    <ellipse cx="836" cy="458.5" rx="6.8" ry="8.6" transform="rotate(-15 836 458.5)" />
    <ellipse cx="874.5" cy="462.5" rx="6.8" ry="8.6" transform="rotate(8 874.5 462.5)" />
    <path d="M855 460c9 0 12 9 18 14 8 7 5 18-5 18.5-5 .3-8-1-13-1s-8 1.5-13 1c-11-1-13-11-5-18.5 6-5 9-14 18-14z" />
    <text x="768" y="492.5" fontSize="42" fontWeight="700" textLength="60" lengthAdjust="spacingAndGlyphs">Bai</text>
    <text x="840" y="487" fontSize="25" fontWeight="700" textLength="29" lengthAdjust="spacingAndGlyphs">du</text>
    <text x="883" y="490.5" fontSize="31" fontWeight="700" textLength="61" lengthAdjust="spacingAndGlyphs">经验</text>
    <text x="768" y="516" fontSize="20" fontWeight="400" textLength="178" lengthAdjust="spacingAndGlyphs">jingyan.baidu.com</text>
  </svg>
);

const ImeBar = () => (
  <div className="absolute top-[525px] left-[529px] flex h-[17px] w-[108px] items-center text-[#454f66]">
    <div className="absolute inset-y-[1px] right-0 left-[10px] border border-[#c3d6e6] bg-white" />
    <div className="relative flex h-[16px] w-[17px] shrink-0 -rotate-6 items-center justify-center rounded-[3px] bg-[#35b216] text-[14px] leading-[16px] font-bold text-white">
      S
    </div>
    <div className="relative ml-[5px] flex items-center">
      <Cell w="w-[15px]"><span className="text-[9.5px] leading-none font-bold">五</span></Cell>
      <Cell w="w-[15px]"><Ico s="size-[9px]"><path d="M8 0.5c5 4 3 11-3.5 11C2 11.5 0.5 10.5 0 9c5 1 9-3 8-8.5z" fill="currentColor" stroke="none" /></Ico></Cell>
      <Cell w="w-[13px]"><Ico s="size-[9px]"><circle cx="2.5" cy="4" r="1.6" /><path d="M8 6h3c.3 2.5-.7 4-2.5 5l-.5-1c.8-.5 1-1 1-1.7H8z" fill="currentColor" stroke="none" /></Ico></Cell>
      <Cell w="w-[16px]">
        <Ico s="h-[8px] w-[11px]" vb="0 0 12 8">
          <rect x="0.5" y="0.5" width="11" height="7" rx="1" fill="currentColor" />
          <path d="M2 2.5h8M2 4.2h8" stroke="#fff" strokeWidth={0.8} strokeDasharray="1 0.7" />
          <path d="M3.5 6h5" stroke="#fff" strokeWidth={0.8} />
        </Ico>
      </Cell>
      <Cell w="w-[13px]"><Ico s="size-[9px]"><circle cx="6" cy="3" r="2.6" fill="#bfd3ce" stroke="none" /><path d="M1.5 9c0-4 9-4 9 0 0 3.5-9 3.5-9 0z" fill="#bfd3ce" stroke="none" /></Ico></Cell>
      <Cell w="w-[11px]"><Ico s="size-[10px]"><path d="M1.5 10.5L7 5" strokeWidth={2.4} /><path d="M9.5 1C7 0.5 5 3 6.2 5.3 7.5 7.5 11 6.5 11.3 3.8L9 4.5 8 3z" fill="currentColor" stroke="none" /></Ico></Cell>
    </div>
  </div>
);

const Gadget = () => (
  <div className="absolute top-[457px] left-[993px] h-[38px] w-[10px] rounded-[3px] bg-[#3c4452] pt-[17px] pl-[3px]">
    <div className="h-[17px] w-[3px] bg-linear-to-b from-[#8a9a4a] to-[#3fb0a0]" />
  </div>
);

const App = () => (
  <div className={clsx("relative flex h-[543px] w-[1000px] flex-col overflow-hidden bg-white", FONT)}>
    <TitleBar />
    <MenuBar />
    <StandardBar />
    <PropertyBar />
    <div className="flex h-[436px] shrink-0">
      <Toolbox />
      <div className="flex flex-1 flex-col">
        <Tabs />
        <div className="h-px shrink-0 bg-[#6fc4ef]" />
        <HRuler />
        <div className="flex h-[413px] shrink-0">
          <VRuler />
          <div className="flex flex-1 flex-col">
            <div className="flex min-h-0 flex-1">
              <Canvas />
              <ScrollV />
            </div>
            <PageNav />
          </div>
        </div>
      </div>
      <Palette />
    </div>
    <div className="flex shrink-0">
      <div className="w-[19px] shrink-0 border-r border-b border-[#dedede] bg-[#f3f3f3]" />
      <div className="flex-1"><DocPalette /></div>
    </div>
    <StatusBar />
    <Dropdown />
    <Watermark />
    <ImeBar />
    <Gadget />
    <Annotations />
  </div>
);

export default App;
